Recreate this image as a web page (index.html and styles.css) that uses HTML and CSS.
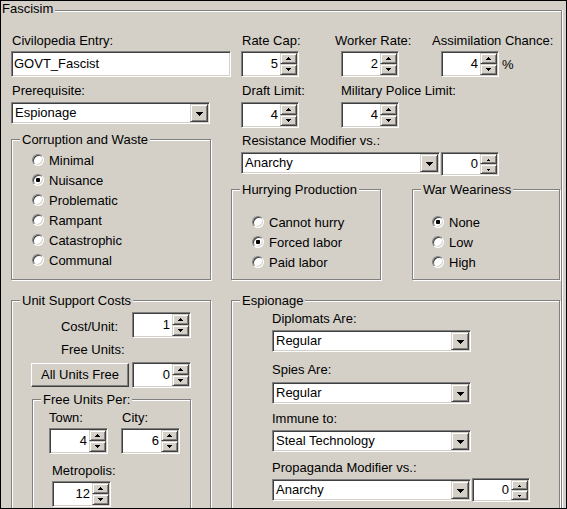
FILE: index.html
```html
<!DOCTYPE html>
<html>
<head>
<meta charset="utf-8">
<link rel="stylesheet" href="styles.css">
</head>
<body>
<div class="window">
  <div class="group main">
    <span class="gtitle">Fascisim</span>

    <div class="band">
      <div class="col-left">
        <div class="lbl ml1">Civilopedia Entry:</div>
        <div class="edit mt3">GOVT_Fascist</div>
        <div class="lbl ml1 mt6">Prerequisite:</div>
        <div class="combo mt4"><span class="ctext">Espionage</span><span class="cbtn"></span></div>
      </div>
      <div class="fields">
        <div class="field">
          <div class="lbl ml1">Rate Cap:</div>
          <div class="spin mt3"><span class="val">5</span><span class="btns"><span class="sb up"></span><span class="sb dn"></span></span></div>
        </div>
        <div class="field">
          <div class="lbl">Worker Rate:</div>
          <div class="spin mt3 ml6"><span class="val">2</span><span class="btns"><span class="sb up"></span><span class="sb dn"></span></span></div>
        </div>
        <div class="field">
          <div class="lbl">Assimilation Chance:</div>
          <div class="srow mt3 ml9">
            <div class="spin"><span class="val">4</span><span class="btns"><span class="sb up"></span><span class="sb dn"></span></span></div>
            <span class="pct">%</span>
          </div>
        </div>
        <div class="field">
          <div class="lbl ml1">Draft Limit:</div>
          <div class="spin mt4"><span class="val">4</span><span class="btns"><span class="sb up"></span><span class="sb dn"></span></span></div>
        </div>
        <div class="field">
          <div class="lbl ml6">Military Police Limit:</div>
          <div class="spin mt4 ml6"><span class="val">4</span><span class="btns"><span class="sb up"></span><span class="sb dn"></span></span></div>
        </div>
      </div>
    </div>

    <div class="band">
      <div class="col-left">
        <div class="group corr">
          <span class="gtitle">Corruption and Waste</span>
          <div class="radio"><span class="rb"></span>Minimal</div>
          <div class="radio"><span class="rb on"></span>Nuisance</div>
          <div class="radio"><span class="rb"></span>Problematic</div>
          <div class="radio"><span class="rb"></span>Rampant</div>
          <div class="radio"><span class="rb"></span>Catastrophic</div>
          <div class="radio"><span class="rb"></span>Communal</div>
        </div>
      </div>
      <div class="col-right">
        <div class="lbl ml11">Resistance Modifier vs.:</div>
        <div class="crow mt4 ml10">
          <div class="combo"><span class="ctext">Anarchy</span><span class="cbtn"></span></div>
          <div class="spin small"><span class="val">0</span><span class="btns"><span class="sb up"></span><span class="sb dn"></span></span></div>
        </div>
        <div class="grow">
          <div class="group hurry">
            <span class="gtitle">Hurrying Production</span>
            <div class="radio"><span class="rb"></span>Cannot hurry</div>
            <div class="radio"><span class="rb on"></span>Forced labor</div>
            <div class="radio"><span class="rb"></span>Paid labor</div>
          </div>
          <div class="group war">
            <span class="gtitle">War Weariness</span>
            <div class="radio"><span class="rb on"></span>None</div>
            <div class="radio"><span class="rb"></span>Low</div>
            <div class="radio"><span class="rb"></span>High</div>
          </div>
        </div>
      </div>
    </div>

    <div class="band bottom">
      <div class="col-left">
        <div class="group units">
          <span class="gtitle">Unit Support Costs</span>
          <div class="urow">
            <span class="ulbl">Cost/Unit:</span>
            <div class="spin wide ml14"><span class="val">1</span><span class="btns"><span class="sb up"></span><span class="sb dn"></span></span></div>
          </div>
          <div class="lbl ml30 mt4">Free Units:</div>
          <div class="urow mt5">
            <div class="btn">All Units Free</div>
            <div class="spin wide ml3"><span class="val">0</span><span class="btns"><span class="sb up"></span><span class="sb dn"></span></span></div>
          </div>
          <div class="group per">
            <span class="gtitle">Free Units Per:</span>
            <div class="perrow">
              <div class="field">
                <div class="lbl">Town:</div>
                <div class="spin wide mt3"><span class="val">4</span><span class="btns"><span class="sb up"></span><span class="sb dn"></span></span></div>
              </div>
              <div class="field ml13">
                <div class="lbl ml1">City:</div>
                <div class="spin wide mt3"><span class="val">6</span><span class="btns"><span class="sb up"></span><span class="sb dn"></span></span></div>
              </div>
            </div>
            <div class="field ml3 mt9">
              <div class="lbl">Metropolis:</div>
              <div class="spin wide mt3"><span class="val">12</span><span class="btns"><span class="sb up"></span><span class="sb dn"></span></span></div>
            </div>
          </div>
        </div>
      </div>
      <div class="group esp">
        <span class="gtitle">Espionage</span>
        <div class="lbl">Diplomats Are:</div>
        <div class="combo mt4"><span class="ctext">Regular</span><span class="cbtn"></span></div>
        <div class="lbl mt10">Spies Are:</div>
        <div class="combo mt5"><span class="ctext">Regular</span><span class="cbtn"></span></div>
        <div class="lbl mt7">Immune to:</div>
        <div class="combo mt4"><span class="ctext">Steal Technology</span><span class="cbtn"></span></div>
        <div class="lbl mt8">Propaganda Modifier vs.:</div>
        <div class="crow mt3">
          <div class="combo mt1"><span class="ctext">Anarchy</span><span class="cbtn"></span></div>
          <div class="spin small"><span class="val">0</span><span class="btns"><span class="sb up"></span><span class="sb dn"></span></span></div>
        </div>
      </div>
    </div>
  </div>
</div>
</body>
</html>
```
FILE: styles.css
```css
* { box-sizing: border-box; }
body {
  margin: 0;
  background: #d4d0c8;
  font: 13px/15px "Liberation Sans", Arial, sans-serif;
  color: #000;
}
.window {
  width: 567px;
  height: 509px;
  border: 1px solid #000;
  overflow: hidden;
  background: #d4d0c8;
}

/* group boxes */
.group {
  position: relative;
  border: 1px solid #808080;
  box-shadow: inset 1px 1px #fff, 1px 1px #fff;
  flex: none;
}
.gtitle {
  position: absolute;
  top: -8px;
  left: 8px;
  padding: 0 2px;
  background: #d4d0c8;
  line-height: 15px;
  white-space: nowrap;
}
.main {
  margin-top: 9px;
  width: 561px;
  height: 520px;
  border-left: none;
  border-bottom: none;
  box-shadow: inset 0 1px #fff, 1px 0 #fff;
  padding: 22px 0 0 10px;
}
.main > .gtitle {
  top: -10px;
  left: 0;
  padding: 0 2px 0 1px;
}

/* layout */
.band { display: flex; align-items: flex-start; }
.bottom { margin-top: 20px; }
.col-left { width: 220px; flex: none; }
.col-right { margin-top: 5px; }
.fields {
  margin-left: 10px;
  display: grid;
  grid-template-columns: 94px 97px 120px;
  row-gap: 6px;
}
.lbl { line-height: 15px; white-space: nowrap; }
.srow { display: flex; align-items: center; }
.pct { margin-left: 3px; }
.crow { display: flex; align-items: flex-start; gap: 1px; }
.grow { display: flex; margin-top: 13px; }

.corr { width: 200px; height: 141px; margin-top: 11px; padding: 10px 0 0 20px; }
.hurry { width: 150px; height: 91px; padding: 22px 0 0 20px; }
.war { width: 148px; height: 91px; padding: 22px 0 0 19px; margin-left: 31px; }
.units { width: 200px; height: 230px; padding: 11px 0 0 19px; }
.per { width: 159px; height: 150px; margin: 11px 0 0 1px; padding: 10px 0 0 16px; }
.perrow { display: flex; }
.esp { width: 329px; height: 230px; padding: 10px 0 0 40px; }
.urow { display: flex; align-items: center; }
.ulbl { width: 87px; text-align: right; padding-top: 3px; line-height: 15px; }

/* spacing helpers */
.ml1 { margin-left: 1px; }
.ml3 { margin-left: 3px; }
.ml6 { margin-left: 6px; }
.ml9 { margin-left: 9px; }
.ml10 { margin-left: 10px; }
.ml11 { margin-left: 11px; }
.ml13 { margin-left: 13px; }
.ml14 { margin-left: 14px; }
.ml30 { margin-left: 30px; }
.mt1 { margin-top: 1px; }
.mt3 { margin-top: 3px; }
.mt4 { margin-top: 4px; }
.mt5 { margin-top: 5px; }
.mt6 { margin-top: 6px; }
.mt7 { margin-top: 7px; }
.mt8 { margin-top: 8px; }
.mt9 { margin-top: 9px; }
.mt10 { margin-top: 10px; }

/* sunken controls */
.edit, .spin, .combo {
  border: 1px solid;
  border-color: #808080 #fff #fff #808080;
  box-shadow: inset 1px 1px #404040, inset -1px -1px #d4d0c8;
  background: #fff;
  padding: 1px;
}
.edit {
  width: 220px;
  height: 26px;
  padding-left: 2px;
  line-height: 22px;
}
.combo {
  display: flex;
  width: 199px;
  height: 22px;
  flex: none;
}
.ctext { flex: 1; padding-left: 2px; line-height: 18px; white-space: nowrap; }
.cbtn, .sb {
  background: #d4d0c8;
  border: 1px solid;
  border-color: #d4d0c8 #404040 #404040 #d4d0c8;
  box-shadow: inset 1px 1px #fff, inset -1px -1px #808080;
  display: flex;
  align-items: center;
  justify-content: center;
}
.cbtn { width: 18px; flex: none; }
.cbtn::after {
  content: "";
  width: 1px;
  height: 1px;
  background: #000;
  transform: translate(0, -1px);
  box-shadow: -3px 0 #000, -2px 0 #000, -1px 0 #000, 1px 0 #000, 2px 0 #000, 3px 0 #000,
    -2px 1px #000, -1px 1px #000, 0 1px #000, 1px 1px #000, 2px 1px #000,
    -1px 2px #000, 0 2px #000, 1px 2px #000, 0 3px #000;
}

.spin {
  display: flex;
  width: 58px;
  height: 26px;
  flex: none;
}
.spin.wide { width: 59px; }
.spin.small { height: 24px; }
.val { flex: 1; text-align: right; padding-right: 2px; line-height: 22px; }
.small .val { line-height: 20px; }
.btns { display: flex; flex-direction: column; width: 17px; flex: none; }
.sb { flex: 1; }
.sb::after {
  content: "";
  width: 1px;
  height: 1px;
  background: #000;
}
.sb.up::after {
  transform: translate(0, -1px);
  box-shadow: -1px 1px #000, 0 1px #000, 1px 1px #000,
    -2px 2px #000, -1px 2px #000, 0 2px #000, 1px 2px #000, 2px 2px #000;
}
.sb.dn::after {
  transform: translate(0, -1px);
  box-shadow: -2px 0 #000, -1px 0 #000, 1px 0 #000, 2px 0 #000,
    -1px 1px #000, 0 1px #000, 1px 1px #000, 0 2px #000;
}
.small .sb.up::after {
  transform: translate(0, 0);
  box-shadow: -1px 1px #000, 0 1px #000, 1px 1px #000;
}
.small .sb.dn::after {
  transform: translate(0, 0);
  box-shadow: -1px 0 #000, 1px 0 #000, 0 1px #000;
}

/* button */
.btn {
  width: 98px;
  height: 24px;
  flex: none;
  border: 1px solid;
  border-color: #fff #404040 #404040 #fff;
  box-shadow: inset -1px -1px #808080;
  background: #d4d0c8;
  text-align: center;
  line-height: 22px;
  white-space: nowrap;
}

/* radios */
.radio { display: flex; align-items: center; height: 20px; white-space: nowrap; }
.rb {
  position: relative;
  flex: none;
  width: 12px;
  height: 12px;
  margin-right: 5px;
  border-radius: 50%;
  border: 1px solid;
  border-color: #808080 #fff #fff #808080;
  box-shadow: inset 1px 1px #404040, inset -1px -1px #d4d0c8;
  background: #fff;
}
.rb.on::after {
  content: "";
  position: absolute;
  left: 3px;
  top: 3px;
  width: 4px;
  height: 4px;
  background: #000;
  border-radius: 1px;
}
```
